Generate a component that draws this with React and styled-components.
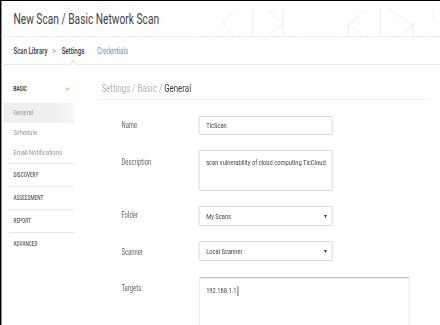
import React from "react";
import styled, { createGlobalStyle, css } from "styled-components";

/* The reference is rendered horizontally condensed: the whole page is laid
   out at a wider design width and squeezed with scaleX. h() converts a
   horizontal length measured in the picture into design pixels. */
const S = 0.72;
const h = (v) => `${(v / S).toFixed(2)}px`;

const Global = createGlobalStyle`
  html, body { margin: 0; padding: 0; background: #fff; overflow: hidden; }
  #root { width: 440px; height: 325px; overflow: hidden; }
`;

const Frame = styled.div`
  box-sizing: border-box;
  width: ${h(440)};
  height: 325px;
  transform: scaleX(${S});
  transform-origin: 0 0;
  border-top: 1px solid #000;
  border-left: ${h(2)} solid #000;
  display: flex;
  flex-direction: column;
  font-family: Roboto, "Liberation Sans", sans-serif;
  color: #444;
  background: #fff;
`;

const Header = styled.header`
  flex: none;
  height: 35px;
  display: flex;
  align-items: center;
  justify-content: space-between;
  padding-left: ${h(12)};
  border-bottom: 1px dotted #dcdcdc;
`;

const Title = styled.h1`
  margin: 0;
  font-size: 14.2px;
  font-weight: 400;
  color: #3f3f3f;
`;

const Deco = styled.svg`
  flex: none;
  width: ${h(220)};
  height: 35px;
  align-self: flex-end;
`;

const Tabs = styled.nav`
  flex: none;
  height: 27px;
  display: flex;
  align-items: stretch;
  padding-left: ${h(12)};
  border-bottom: 1px solid #ececec;
`;

const Tab = styled.span`
  position: relative;
  display: flex;
  align-items: center;
  font-size: 8.5px;
  font-weight: 500;
  color: #3a3a3a;
  margin-right: ${(p) => h(p.$gap || 0)};
  ${(p) =>
    p.$link &&
    css`
      font-weight: 400;
      color: #5193d2;
    `}
  ${(p) =>
    p.$sep &&
    css`
      font-weight: 400;
      color: #888;
    `}
  ${(p) =>
    p.$active &&
    css`
      &::after {
        content: "";
        position: absolute;
        left: 50%;
        bottom: -4px;
        width: 6px;
        height: 6px;
        background: #fff;
        border-left: 1px solid #dadada;
        border-top: 1px solid #dadada;
        transform: translateX(-50%) rotate(45deg);
      }
    `}
`;

const Body = styled.div`
  flex: 1;
  display: flex;
  min-height: 0;
`;

const Side = styled.aside`
  flex: none;
  width: ${h(73)};
  padding-top: 15px;
`;

const SideHead = styled.div`
  height: 18px;
  display: flex;
  align-items: center;
  justify-content: space-between;
  padding: 0 ${h(5)} 0 ${h(12)};
  font-size: 6.5px;
  font-weight: 700;
  color: #3a3a3a;
  text-transform: uppercase;
`;

const SideList = styled.ul`
  list-style: none;
  margin: 5px 0 0;
  padding: 0;
`;

const SideItem = styled.li`
  height: 20px;
  line-height: 20px;
  margin-left: ${h(2)};
  padding-left: ${h(10)};
  font-size: 8px;
  color: #939393;
  background: ${(p) => (p.$active ? "linear-gradient(90deg,#efefef 70%,#f7f7f7)" : "transparent")};
`;

const SideSection = styled.div`
  box-sizing: border-box;
  height: 23px;
  display: flex;
  align-items: center;
  margin-left: ${h(8)};
  padding-left: ${h(4)};
  border-top: 1px solid #e8e8e8;
  font-size: 6.5px;
  font-weight: 500;
  color: #5a5a5a;
  text-transform: uppercase;
`;

const Main = styled.main`
  flex: 1;
  padding: 0 ${h(10)} 0 ${h(25)};
`;

const Crumb = styled.div`
  height: 21px;
  margin-top: 13px;
  display: flex;
  align-items: center;
  padding-left: ${h(2)};
  border-bottom: 1px solid #eeeeee;
  font-size: 11px;
  color: #b3b3b3;
  & b {
    font-weight: 400;
    color: #3a3a3a;
  }
`;

const Form = styled.div`
  display: flex;
  flex-direction: column;
  gap: 15px;
  padding-top: 16px;
`;

const Row = styled.div`
  display: flex;
  align-items: flex-start;
`;

const Label = styled.label`
  flex: none;
  width: ${h(77)};
  margin-left: ${h(22)};
  padding-top: ${(p) => p.$top || 0}px;
  line-height: 19px;
  font-size: 8.2px;
  color: #606060;
`;

const Field = styled.div`
  box-sizing: border-box;
  flex: none;
  display: flex;
  align-items: ${(p) => (p.$multi ? "flex-start" : "center")};
  justify-content: space-between;
  width: ${(p) => h(p.$w || 134)};
  height: ${(p) => p.$h || 19}px;
  padding: ${(p) => (p.$multi ? `${p.$pt || 8}px` : 0)} ${h(5)} 0 ${h(7)};
  border-style: solid;
  border-color: ${(p) => (p.$focus ? "#c4c4c4 #cfcfcf #cfcfcf" : "#d3d3d3")};
  border-width: 1px ${h(1)};
  border-radius: 2px;
  font-size: 8px;
  color: #404040;
  background: #fff;
  box-shadow: ${(p) => (p.$focus ? "inset 0 1px 2px rgba(0,0,0,0.08)" : "none")};
`;

const Caret = styled.span`
  flex: none;
  width: 0;
  height: 0;
  border-left: ${h(1.6)} solid transparent;
  border-right: ${h(1.6)} solid transparent;
  border-top: 3px solid #333;
`;

const Cursor = styled.span`
  display: inline-block;
  width: 0;
  height: 10px;
  margin-left: ${h(1)};
  border-left: ${h(0.8)} solid #333;
  vertical-align: middle;
`;

const Chevron = () => (
  <svg width={h(4)} height="4" viewBox="0 0 4 3" preserveAspectRatio="none">
    <polyline
      points="0.4,0.4 2,2.4 3.6,0.4"
      fill="none"
      stroke="#7cb342"
      strokeWidth="0.9"
      vectorEffect="non-scaling-stroke"
    />
  </svg>
);

const HeaderArt = () => (
  <Deco viewBox="0 0 220 35" preserveAspectRatio="none">
    <g fill="none" strokeWidth="1">
      <g stroke="#eaece8">
        <polyline points="14,8 2,22 14,35" vectorEffect="non-scaling-stroke" />
        <line x1="32" y1="8" x2="32" y2="35" vectorEffect="non-scaling-stroke" />
        <polyline points="46,8 63,23 46,35" vectorEffect="non-scaling-stroke" />
        <line x1="63" y1="8" x2="63" y2="35" vectorEffect="non-scaling-stroke" />
      </g>
      <g stroke="#e6ece0">
        <polyline points="146,8 128,24 142,35" vectorEffect="non-scaling-stroke" />
        <line x1="128" y1="22" x2="128" y2="35" vectorEffect="non-scaling-stroke" />
        <line x1="160" y1="7" x2="160" y2="35" vectorEffect="non-scaling-stroke" />
        <polyline points="168,8 193,24 178,35" vectorEffect="non-scaling-stroke" />
        <line x1="193" y1="21" x2="193" y2="35" vectorEffect="non-scaling-stroke" />
        <line x1="213" y1="8" x2="213" y2="18" vectorEffect="non-scaling-stroke" />
      </g>
    </g>
  </Deco>
);

export default function App() {
  return (
    <>
      <Global />
      <Frame>
        <Header>
          <Title>New Scan / Basic Network Scan</Title>
          <HeaderArt />
        </Header>
        <Tabs>
          <Tab $gap={5}>Scan Library</Tab>
          <Tab $sep $gap={6}>&gt;</Tab>
          <Tab $active $gap={13}>Settings</Tab>
          <Tab $link>Credentials</Tab>
        </Tabs>
        <Body>
          <Side>
            <SideHead>
              <span>Basic</span>
              <Chevron />
            </SideHead>
            <SideList>
              <SideItem $active>General</SideItem>
              <SideItem>Schedule</SideItem>
              <SideItem>Email Notifications</SideItem>
            </SideList>
            <SideSection>Discovery</SideSection>
            <SideSection>Assessment</SideSection>
            <SideSection>Report</SideSection>
            <SideSection>Advanced</SideSection>
          </Side>
          <Main>
            <Crumb>
              Settings / Basic /&nbsp;<b>General</b>
            </Crumb>
            <Form>
              <Row>
                <Label>Name</Label>
                <Field>TicScan</Field>
              </Row>
              <Row>
                <Label $top={3}>Description</Label>
                <Field $multi $h={41} $pt={7}>
                  scan vulnerability of cloud computing TicCloud
                </Field>
              </Row>
              <Row>
                <Label>Folder</Label>
                <Field $h={20}>
                  <span>My Scans</span>
                  <Caret />
                </Field>
              </Row>
              <Row>
                <Label $top={2}>Scanner</Label>
                <Field $h={20}>
                  <span>Local Scanner</span>
                  <Caret />
                </Field>
              </Row>
              <Row>
                <Label $top={2}>Targets</Label>
                <Field $multi $focus $w={211} $h={60} $pt={8}>
                  <span>
                    192.168.1.1
                    <Cursor />
                  </span>
                </Field>
              </Row>
            </Form>
          </Main>
        </Body>
      </Frame>
    </>
  );
}
